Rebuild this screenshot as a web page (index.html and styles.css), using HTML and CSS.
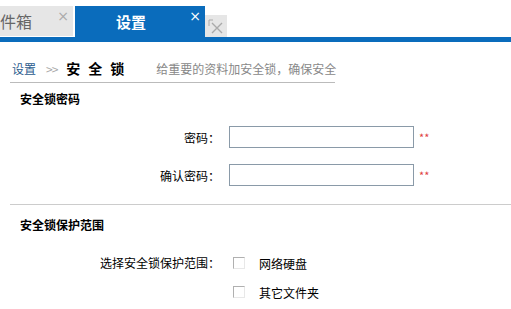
FILE: index.html
```html
<!DOCTYPE html>
<html lang="zh">
<head>
<meta charset="utf-8">
<link rel="stylesheet" href="styles.css">
</head>
<body>
<div class="tabbar">
  <div class="tab tab-idle"><span class="tab-text">收件箱</span><span class="tab-close">×</span></div>
  <div class="tab tab-active"><span class="tab-text">设置</span><span class="tab-close">×</span></div>
  <div class="tab-mini"><svg width="22" height="22" viewBox="0 0 22 22"><path d="M4 11V5h4" fill="none" stroke="#aaa" stroke-width="1"/><path d="M7 8l10 10M17 8L7 18" stroke="#aaa" stroke-width="1.4"/></svg></div>
</div>
<div class="content">
  <div class="crumb">
    <span class="crumb-link">设置</span>
    <span class="crumb-sep">&gt;&gt;</span>
    <span class="crumb-title">安全锁</span>
    <span class="crumb-desc">给重要的资料加安全锁，确保安全</span>
  </div>
  <div class="section">
    <h3 class="section-title">安全锁密码</h3>
    <div class="row">
      <label class="row-label">密码：</label>
      <input class="field" type="password">
      <span class="req">**</span>
    </div>
    <div class="row">
      <label class="row-label">确认密码：</label>
      <input class="field" type="password">
      <span class="req">**</span>
    </div>
  </div>
  <div class="section section-border">
    <h3 class="section-title section-title-2">安全锁保护范围</h3>
    <div class="row row-check">
      <label class="row-label">选择安全锁保护范围：</label>
      <div class="checks">
        <div class="check"><span class="box"></span><span>网络硬盘</span></div>
        <div class="check"><span class="box"></span><span>其它文件夹</span></div>
      </div>
    </div>
  </div>
</div>
</body>
</html>
```
FILE: styles.css
```css
* { box-sizing: border-box; }
body {
  margin: 0;
  background: #fff;
  font-family: "Noto Sans CJK SC", "Liberation Sans", sans-serif;
  font-size: 12px;
  color: #000;
  overflow: hidden;
}
.tabbar {
  display: flex;
  align-items: flex-end;
  height: 42px;
  padding-top: 6px;
  border-bottom: 5px solid #0a6cbc;
}
.tab {
  position: relative;
  height: 31px;
  display: flex;
  align-items: center;
}
.tab-idle {
  width: 73px;
  height: 30px;
  margin-bottom: 1px;
  margin-right: 2px;
  background: #e6e6e6;
  overflow: hidden;
}
.tab-idle .tab-text {
  font-size: 16px;
  color: #666;
  margin-left: -16px;
  white-space: nowrap;
}
.tab-active {
  width: 130px;
  background: #0a6cbc;
  justify-content: center;
  padding-right: 18px;
}
.tab-active .tab-text {
  color: #fff;
  font-weight: bold;
  font-size: 15px;
}
.tab-close {
  position: absolute;
  top: 2px;
  right: 4px;
  font-size: 14px;
  line-height: 16px;
  color: #aaa;
  font-family: "DejaVu Sans", sans-serif;
}
.tab-active .tab-close { color: #fff; }
.tab-mini {
  width: 22px;
  height: 22px;
  background: #e6e6e6;
}
.tab-mini svg { display: block; }
.content {
  padding: 0 0 0 10px;
}
.crumb {
  display: flex;
  align-items: baseline;
  width: 325px;
  height: 41px;
  padding: 18px 0 0 2px;
  line-height: 16px;
  white-space: nowrap;
  border-bottom: 1px solid #bbb;
}
.crumb > span { flex-shrink: 0; }
.crumb-link { color: #2b5c8e; font-size: 12px; }
.crumb-sep { color: #aaa; margin: 0 9px 0 10px; font-size: 12px; letter-spacing: -1px; }
.crumb-title { font-size: 14px; font-weight: bold; letter-spacing: 8px; margin-right: 24px; }
.crumb-desc { color: #888; font-size: 12px; }
.section { padding: 7px 0 18px 10px; }
.section-border { border-top: 1px solid #ccc; padding-top: 11px; }
.section-title { margin: 0 0 18px; font-size: 12px; font-weight: bold; line-height: 18px; }
.section-title-2 { margin-bottom: 20px; }
.row { display: flex; align-items: center; height: 22px; margin-bottom: 16px; }
.row:last-child { margin-bottom: 0; }
.row-label { width: 209px; text-align: right; padding-right: 9px; white-space: nowrap; }
.field {
  width: 185px;
  height: 22px;
  border: 1px solid #8a9aa8;
  margin: 0;
}
.req { color: #e04040; font-size: 11px; margin-left: 5px; }
.row-check { align-items: flex-start; height: auto; }
.row-check .row-label { line-height: 18px; }
.checks { display: flex; flex-direction: column; gap: 11px; padding-left: 4px; }
.check { display: flex; align-items: center; height: 18px; gap: 14px; }
.box {
  width: 12px; height: 12px;
  border: 1px solid #b0b0b0;
  border-right-color: #e8e8e8;
  border-bottom-color: #e8e8e8;
  background: #fff;
}
```
